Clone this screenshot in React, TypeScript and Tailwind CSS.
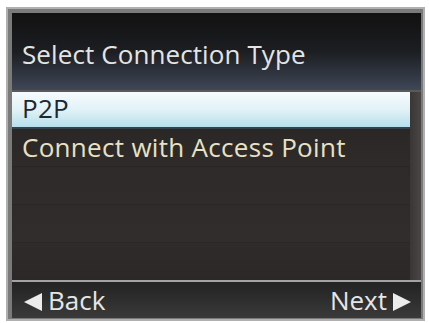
import React from "react";

const font = { fontFamily: '"Open Sans", "Noto Sans", sans-serif' };

export default function App() {
  return (
    <div className="w-[429px] h-[323px] bg-white pl-[6px] pt-[7px]" style={font}>
      <div className="w-[419px] h-[314px] border-2 border-[#b0b0b0] bg-[#7a7a7a] pl-[4px] pt-[4px] pr-[2px] pb-[1px]">
        <div className="w-[409px] h-[305px] flex flex-col">
          {/* Header */}
          <div className="h-[77px] bg-gradient-to-b from-[#111111] via-[#1c1e22] to-[#3f4757] pt-[23px] pl-[10px]">
            <div className="text-[26px] font-medium leading-[36px] tracking-[0.1px] text-[#e4e4e4]">Select Connection Type</div>
          </div>
          <div className="h-[2px] bg-[#5a5a5a]" />
          {/* List */}
          <div className="h-[188px] flex bg-[#2d2929]">
            <div className="flex-1 flex flex-col">
              <div className="h-[37px] bg-gradient-to-b from-[#f6fbfd] via-[#e2f2f7] to-[#b6dfeb] border-b-2 border-[#34424a] pl-[10px]">
                <div className="text-[26px] font-medium leading-[32px] tracking-[0.3px] text-[#1b2733]">P2P</div>
              </div>
              <div className="h-[37px] bg-gradient-to-b from-[#2b2727] to-[#2f2b2b] pl-[10px]">
                <div className="text-[26px] font-medium leading-[37px] tracking-[0.3px] text-[#e8e1c3]">Connect with Access Point</div>
              </div>
              <div className="h-[38px] border-t border-[#2a2626] bg-gradient-to-b from-[#2e2a2a] to-[#302c2c]" />
              <div className="h-[38px] border-t border-[#2b2727] bg-gradient-to-b from-[#2f2b2b] to-[#312d2d]" />
              <div className="h-[38px] border-t border-[#2b2727] bg-gradient-to-b from-[#2f2b2b] to-[#2c2828]" />
            </div>
            <div className="w-[11px] bg-gradient-to-r from-[#3a3636] to-[#4a4646]" />
          </div>
          <div className="h-[2px] bg-[#a3a3a3]" />
          {/* Footer */}
          <div className="h-[36px] flex items-start justify-between bg-gradient-to-b from-[#232323] via-[#2e2e2e] to-[#3a3a3a] pl-[11px] pr-[9px]">
            <div className="flex items-center h-[36px]">
              <svg width="20" height="18" viewBox="0 0 20 18" className="mt-[3px]">
                <polygon points="1,9 19,0 19,18" fill="#ececec" />
              </svg>
              <span className="ml-[5px] text-[26px] font-medium leading-[36px] text-[#e6e6e6]">Back</span>
            </div>
            <div className="flex items-center h-[36px]">
              <span className="mr-[5px] text-[26px] font-medium leading-[36px] text-[#e6e6e6]">Next</span>
              <svg width="20" height="18" viewBox="0 0 20 18" className="mt-[3px]">
                <polygon points="19,9 1,0 1,18" fill="#ececec" />
              </svg>
            </div>
          </div>
        </div>
      </div>
    </div>
  );
}
